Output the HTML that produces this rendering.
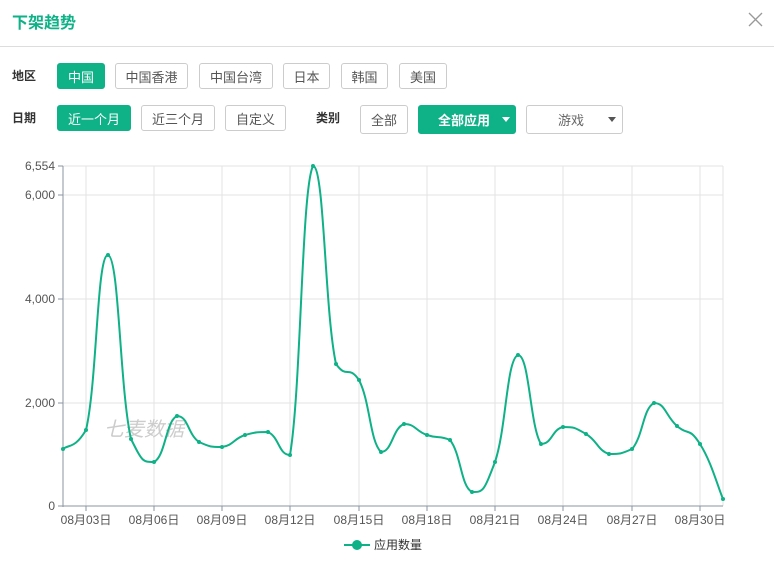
<!DOCTYPE html>
<html><head><meta charset="utf-8"><style>
*{margin:0;padding:0;box-sizing:border-box}
body{width:774px;height:567px;background:#fff;font-family:"Liberation Sans","Noto Sans CJK SC",sans-serif;position:relative;overflow:hidden;color:#333}
.t{position:absolute;left:12px;top:9px;font-size:16px;font-weight:bold;color:#0fb187}
.x{position:absolute;left:748px;top:12px;width:15px;height:15px}
.hr{position:absolute;left:0;top:46px;width:774px;height:1px;background:#ddd}
.l{position:absolute;font-size:12px;font-weight:bold;color:#333}
.b{position:absolute;height:26px;border:1px solid #ccc;border-radius:3px;font-size:13px;color:#555;display:flex;align-items:center;justify-content:center;background:#fff}
.g{background:#0fb187;border-color:#0fb187;color:#fff}
.tri{position:absolute;width:0;height:0;border-left:4px solid transparent;border-right:4px solid transparent;border-top:5px solid #fff}
</style></head><body>
<div class="t">下架趋势</div>
<svg class="x" viewBox="0 0 15 15"><path d="M1 1L14 14M14 1L1 14" stroke="#999" stroke-width="1.3"/></svg>
<div class="hr"></div>
<div class="l" style="left:12px;top:67px">地区</div>
<div class="b g" style="left:57px;top:63px;width:48px">中国</div>
<div class="b" style="left:115px;top:63px;width:73px">中国香港</div>
<div class="b" style="left:199px;top:63px;width:74px">中国台湾</div>
<div class="b" style="left:283px;top:63px;width:47px">日本</div>
<div class="b" style="left:341px;top:63px;width:47px">韩国</div>
<div class="b" style="left:399px;top:63px;width:48px">美国</div>
<div class="l" style="left:12px;top:109px">日期</div>
<div class="b g" style="left:57px;top:105px;width:74px">近一个月</div>
<div class="b" style="left:141px;top:105px;width:74px">近三个月</div>
<div class="b" style="left:225px;top:105px;width:61px">自定义</div>
<div class="l" style="left:316px;top:109px">类别</div>
<div class="b" style="left:360px;top:105px;width:48px;height:29px">全部</div>
<div class="b g" style="left:418px;top:105px;width:98px;height:29px;justify-content:flex-start;padding-left:19px;font-weight:bold">全部应用</div>
<div class="tri" style="left:502px;top:117px"></div>
<div class="b" style="left:526px;top:105px;width:97px;height:29px;justify-content:flex-start;padding-left:31px;color:#666">游戏</div>
<div class="tri" style="left:608px;top:117px;border-top-color:#555"></div>
<svg id="c" style="position:absolute;left:0;top:0" width="774" height="567"></svg>
<script>
var P=[[63,449],[86,430],[108,255],[131,439],[154,462],[177,416],[199,442],[222,447],[245,435],[268,432],[290,455],[313,166],[336,364],[359,380],[381,452],[404,424],[427,435],[450,440],[472,492],[495,462],[518,355],[541,444],[563,427],[586,434],[609,454],[632,449],[654,403],[677,426],[700,444],[723,499]];
var s='';
[166,195,299,403].forEach(function(y){s+='<line x1="63" x2="723" y1="'+y+'" y2="'+y+'" stroke="#e3e3e3"/>';});
for(var i=1;i<30;i+=3){var x=P[i][0];s+='<line x1="'+x+'" x2="'+x+'" y1="166" y2="506" stroke="#e3e3e3"/>';}
s+='<line x1="723" x2="723" y1="166" y2="506" stroke="#e3e3e3"/>';
s+='<line x1="63" x2="63" y1="166" y2="507" stroke="#8a96a0"/><line x1="63" x2="723" y1="506" y2="506" stroke="#8a96a0"/>';
[[166,'6,554'],[195,'6,000'],[299,'4,000'],[403,'2,000'],[506,'0']].forEach(function(a){s+='<line x1="58" x2="63" y1="'+a[0]+'" y2="'+a[0]+'" stroke="#8a96a0"/><text x="55" y="'+(a[0]+4)+'" text-anchor="end" font-size="12" fill="#555">'+a[1]+'</text>';});
var labs=['08月03日','08月06日','08月09日','08月12日','08月15日','08月18日','08月21日','08月24日','08月27日','08月30日'];
for(var k=0;k<10;k++){var x=P[1+3*k][0];s+='<line x1="'+x+'" x2="'+x+'" y1="506" y2="511" stroke="#8a96a0"/><text x="'+x+'" y="524" text-anchor="middle" font-size="12" fill="#555">'+labs[k]+'</text>';}
s+='<text x="104" y="436" font-size="20" fill="#ccc" font-style="italic">七麦数据</text>';
function cl(v,a,b){var lo=Math.min(a,b),hi=Math.max(a,b);return Math.max(lo,Math.min(hi,v));}
var d='M'+P[0][0]+' '+P[0][1],t=0.25;
for(var i=0;i<29;i++){var p0=P[Math.max(i-1,0)],p1=P[i],p2=P[i+1],p3=P[Math.min(i+2,29)];
var c1y=cl(p1[1]+(p2[1]-p0[1])*t,p1[1],p2[1]),c2y=cl(p2[1]-(p3[1]-p1[1])*t,p1[1],p2[1]);
d+=' C'+(p1[0]+(p2[0]-p0[0])*t)+' '+c1y+' '+(p2[0]-(p3[0]-p1[0])*t)+' '+c2y+' '+p2[0]+' '+p2[1];}
s+='<path d="'+d+'" fill="none" stroke="#0fb187" stroke-width="2"/>';
P.forEach(function(p){s+='<circle cx="'+p[0]+'" cy="'+p[1]+'" r="2" fill="#0fb187"/>';});
s+='<line x1="344" x2="370" y1="545" y2="545" stroke="#0fb187" stroke-width="2"/><circle cx="357" cy="545" r="5" fill="#0fb187"/><text x="374" y="549" font-size="12" fill="#333">应用数量</text>';
document.getElementById('c').innerHTML=s;
</script>
</body></html>
